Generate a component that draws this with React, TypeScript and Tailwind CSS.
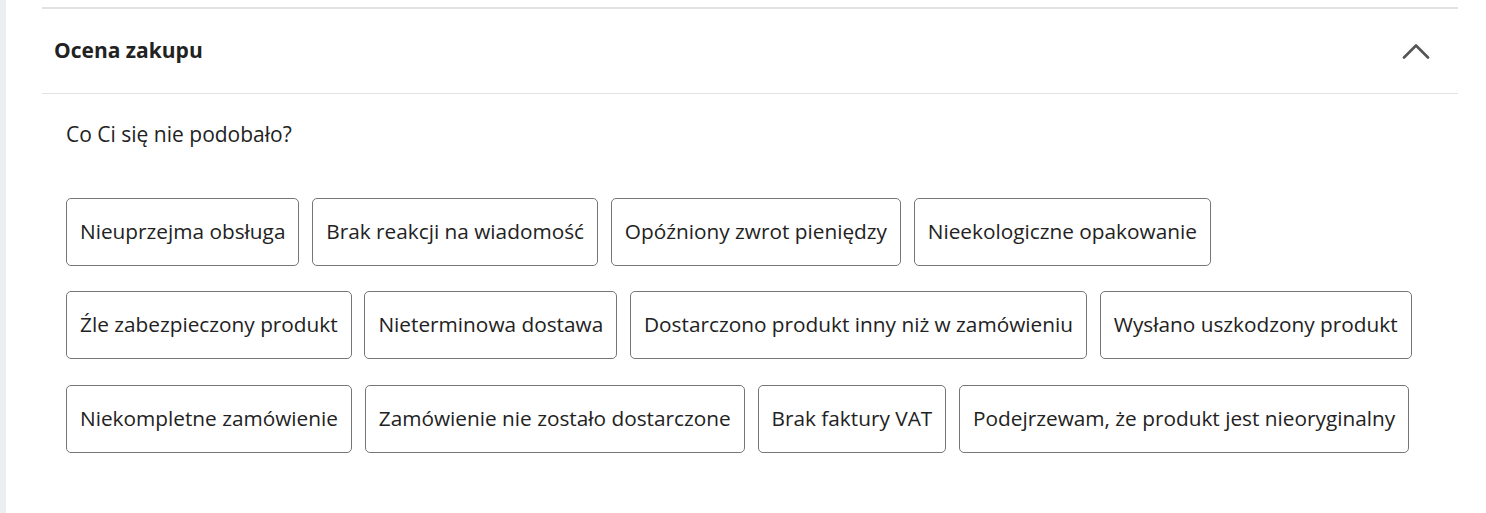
const reasons = [
  ['Nieuprzejma obsługa', 'Brak reakcji na wiadomość', 'Opóźniony zwrot pieniędzy', 'Nieekologiczne opakowanie'],
  ['Źle zabezpieczony produkt', 'Nieterminowa dostawa', 'Dostarczono produkt inny niż w zamówieniu', 'Wysłano uszkodzony produkt'],
  ['Niekompletne zamówienie', 'Zamówienie nie zostało dostarczone', 'Brak faktury VAT', 'Podejrzewam, że produkt jest nieoryginalny'],
];

export default function App() {
  return (
    <div className="flex min-h-[513px] bg-white font-['Open_Sans',sans-serif] text-[#222222]">
      <div className="w-[6px] shrink-0 bg-[#eceef0]" />
      <div className="flex-1 pl-[36px] pr-[28px] pt-[7px]">
        <section className="border-t-2 border-[#e2e2e2]">
          <div className="flex h-[85px] items-center justify-between border-b border-[#e2e2e2] pl-[12px] pr-[28px]">
            <h2 className="text-[21px] font-bold">Ocena zakupu</h2>
            <svg width="28" height="16" viewBox="0 0 28 16" fill="none">
              <polyline points="2,14.5 14,2.5 26,14.5" stroke="#555555" strokeWidth="2.6" strokeLinecap="round" strokeLinejoin="round" />
            </svg>
          </div>
          <div className="px-[24px] pt-[25px]">
            <p className="text-[21px]">Co Ci się nie podobało?</p>
            <div className="mt-[47px] flex flex-col gap-[25.5px]">
              {reasons.map((row, i) => (
                <div key={i} className="flex gap-[12.75px]">
                  {row.map((r) => (
                    <button
                      key={r}
                      className="h-[68px] rounded-[5px] border border-[#767676] bg-white px-[13px] text-[20.8px] whitespace-nowrap"
                    >
                      {r}
                    </button>
                  ))}
                </div>
              ))}
            </div>
          </div>
        </section>
      </div>
    </div>
  );
}
